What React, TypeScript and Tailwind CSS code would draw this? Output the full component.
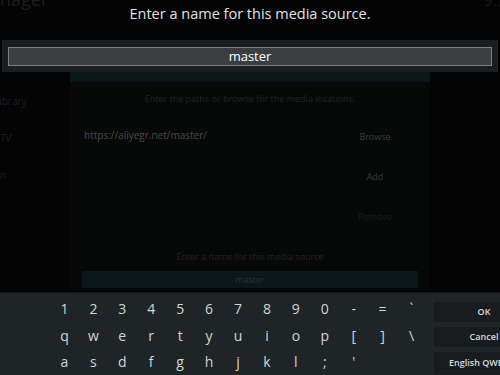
import React from "react";

const rows = [
  ["1", "2", "3", "4", "5", "6", "7", "8", "9", "0", "-", "=", "`"],
  ["q", "w", "e", "r", "t", "y", "u", "i", "o", "p", "[", "]", "\\"],
  ["a", "s", "d", "f", "g", "h", "j", "k", "l", ";", "'", "", ""],
];

function BackgroundDialog() {
  return (
    <div className="flex h-full w-full">
      {/* side menu of the page behind */}
      <div className="flex w-[70px] flex-col text-[10px] text-[#1e1e1e]">
        <div className="mt-[94px] -ml-[6px]">Library</div>
        <div className="mt-[22px]">TV</div>
        <div className="mt-[22px]">n</div>
      </div>
      <div className="mt-[72px] flex h-[218px] w-[360px] flex-col bg-[#070808]">
        <div className="h-[10px] bg-[#09161a]" />
        <div className="mt-[10px] text-center text-[9px] text-[#222]">
          Enter the paths or browse for the media locations.
        </div>
        <div className="flex">
          <div className="w-[260px] pl-[14px] pt-[22px] text-[10px] text-[#484848]">
            https://aliyegr.net/master/
          </div>
          <div className="flex w-[90px] flex-col items-center pt-[20px] text-[9px] text-[#3a3a3a]">
            <div className="flex h-[22px] w-[80px] items-center justify-center">Browse</div>
            <div className="mt-[18px] flex h-[22px] w-[80px] items-center justify-center">Add</div>
            <div className="mt-[18px] flex h-[22px] w-[80px] items-center justify-center text-[#1c1c1c]">Remove</div>
          </div>
        </div>
        <div className="mt-[22px] text-center text-[9px] text-[#222]">
          Enter a name for this media source
        </div>
        <div className="mx-[12px] mt-[8px] flex h-[17px] items-center justify-center bg-[#0a181c] text-[9px] text-[#283234]">
          master
        </div>
      </div>
    </div>
  );
}

export default function App() {
  return (
    <div
      className="relative h-[375px] w-[500px] overflow-hidden bg-[#040404]"
      style={{ fontFamily: '"Open Sans", "Noto Sans", sans-serif' }}
    >
      <BackgroundDialog />
      <div className="absolute left-0 top-[-14px] text-[18px] text-[#1e1e1e]">nager</div>
      <div className="absolute right-[-6px] top-[-12px] text-[16px] text-[#161616]">9:3</div>

      <div className="absolute inset-0 flex flex-col">
        <div className="mt-[3px] text-center text-[14.5px] leading-[22px] text-[#e2e2e2]">
          Enter a name for this media source.
        </div>
        <div className="mx-[2px] mt-[15px] h-[32px] bg-[#1b1e20] px-[6px] pt-[7px]">
          <div className="flex h-[19px] items-center justify-center border border-[#7c8082] bg-[#3b3e41] text-[13px] text-white">
            master
          </div>
        </div>
        <div className="flex-1" />
        <div className="flex h-[83px] border-t border-[#15181a] bg-[#1f2427]">
          <div className="ml-[50px] flex w-[376px] shrink-0 flex-col pt-[2px]">
            {rows.map((row, i) => (
              <div key={i} className="grid h-[29px] grid-cols-13 items-center">
                {row.map((k, j) => (
                  <div key={j} className="text-center text-[14px] text-[#d4d6d7]">
                    {k}
                  </div>
                ))}
              </div>
            ))}
          </div>
          <div className="ml-[8px] flex w-[100px] shrink-0 flex-col gap-[5px] pt-[9px] text-[9px] font-semibold text-[#d8dadb]">
            <div className="flex h-[20px] items-center justify-center bg-[#181c1e]">OK</div>
            <div className="flex h-[20px] items-center justify-center bg-[#181c1e]">Cancel</div>
            <div className="flex h-[22px] items-center justify-center whitespace-nowrap bg-[#181c1e]">English QWERTY</div>
          </div>
        </div>
      </div>
    </div>
  );
}
